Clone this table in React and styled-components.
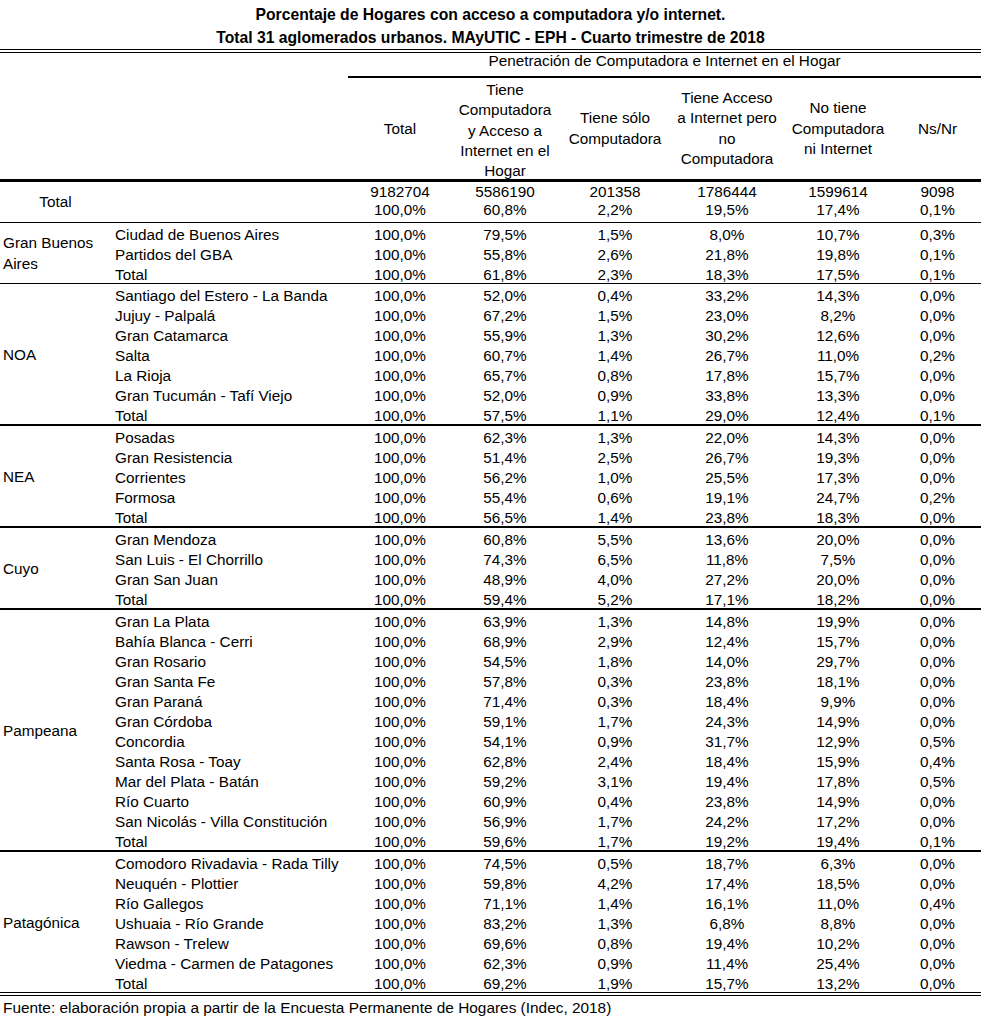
import React from 'react';
import styled, { createGlobalStyle } from 'styled-components';

const GlobalStyle = createGlobalStyle`
  body {
    margin: 0;
    background: #fff;
    color: #000;
    font-family: "Liberation Sans", Arial, sans-serif;
  }
`;

const widths = [111, 237, 104, 106, 114, 110, 112, 87];

const headers = [
  ['Total'],
  ['Tiene', 'Computadora', 'y Acceso a', 'Internet en el', 'Hogar'],
  ['Tiene sólo', 'Computadora'],
  ['Tiene Acceso', 'a Internet pero', 'no', 'Computadora'],
  ['No tiene', 'Computadora', 'ni Internet'],
  ['Ns/Nr'],
];

const totals = [
  ['9182704', '5586190', '201358', '1786444', '1599614', '9098'],
  ['100,0%', '60,8%', '2,2%', '19,5%', '17,4%', '0,1%'],
];

const groups = [
  {
    region: 'Gran Buenos Aires',
    border: '1px solid #000',
    rows: [
      ['Ciudad de Buenos Aires', '79,5%', '1,5%', '8,0%', '10,7%', '0,3%'],
      ['Partidos del GBA', '55,8%', '2,6%', '21,8%', '19,8%', '0,1%'],
      ['Total', '61,8%', '2,3%', '18,3%', '17,5%', '0,1%'],
    ],
  },
  {
    region: 'NOA',
    border: '2px solid #000',
    rows: [
      ['Santiago del Estero - La Banda', '52,0%', '0,4%', '33,2%', '14,3%', '0,0%'],
      ['Jujuy - Palpalá', '67,2%', '1,5%', '23,0%', '8,2%', '0,0%'],
      ['Gran Catamarca', '55,9%', '1,3%', '30,2%', '12,6%', '0,0%'],
      ['Salta', '60,7%', '1,4%', '26,7%', '11,0%', '0,2%'],
      ['La Rioja', '65,7%', '0,8%', '17,8%', '15,7%', '0,0%'],
      ['Gran Tucumán - Tafí Viejo', '52,0%', '0,9%', '33,8%', '13,3%', '0,0%'],
      ['Total', '57,5%', '1,1%', '29,0%', '12,4%', '0,1%'],
    ],
  },
  {
    region: 'NEA',
    border: '2px solid #000',
    rows: [
      ['Posadas', '62,3%', '1,3%', '22,0%', '14,3%', '0,0%'],
      ['Gran Resistencia', '51,4%', '2,5%', '26,7%', '19,3%', '0,0%'],
      ['Corrientes', '56,2%', '1,0%', '25,5%', '17,3%', '0,0%'],
      ['Formosa', '55,4%', '0,6%', '19,1%', '24,7%', '0,2%'],
      ['Total', '56,5%', '1,4%', '23,8%', '18,3%', '0,0%'],
    ],
  },
  {
    region: 'Cuyo',
    border: '2px solid #000',
    rows: [
      ['Gran Mendoza', '60,8%', '5,5%', '13,6%', '20,0%', '0,0%'],
      ['San Luis - El Chorrillo', '74,3%', '6,5%', '11,8%', '7,5%', '0,0%'],
      ['Gran San Juan', '48,9%', '4,0%', '27,2%', '20,0%', '0,0%'],
      ['Total', '59,4%', '5,2%', '17,1%', '18,2%', '0,0%'],
    ],
  },
  {
    region: 'Pampeana',
    border: '2px solid #000',
    rows: [
      ['Gran La Plata', '63,9%', '1,3%', '14,8%', '19,9%', '0,0%'],
      ['Bahía Blanca - Cerri', '68,9%', '2,9%', '12,4%', '15,7%', '0,0%'],
      ['Gran Rosario', '54,5%', '1,8%', '14,0%', '29,7%', '0,0%'],
      ['Gran Santa Fe', '57,8%', '0,3%', '23,8%', '18,1%', '0,0%'],
      ['Gran Paraná', '71,4%', '0,3%', '18,4%', '9,9%', '0,0%'],
      ['Gran Córdoba', '59,1%', '1,7%', '24,3%', '14,9%', '0,0%'],
      ['Concordia', '54,1%', '0,9%', '31,7%', '12,9%', '0,5%'],
      ['Santa Rosa - Toay', '62,8%', '2,4%', '18,4%', '15,9%', '0,4%'],
      ['Mar del Plata - Batán', '59,2%', '3,1%', '19,4%', '17,8%', '0,5%'],
      ['Río Cuarto', '60,9%', '0,4%', '23,8%', '14,9%', '0,0%'],
      ['San Nicolás - Villa Constitución', '56,9%', '1,7%', '24,2%', '17,2%', '0,0%'],
      ['Total', '59,6%', '1,7%', '19,2%', '19,4%', '0,1%'],
    ],
  },
  {
    region: 'Patagónica',
    border: '4px double #000',
    rows: [
      ['Comodoro Rivadavia - Rada Tilly', '74,5%', '0,5%', '18,7%', '6,3%', '0,0%'],
      ['Neuquén - Plottier', '59,8%', '4,2%', '17,4%', '18,5%', '0,0%'],
      ['Río Gallegos', '71,1%', '1,4%', '16,1%', '11,0%', '0,4%'],
      ['Ushuaia - Río Grande', '83,2%', '1,3%', '6,8%', '8,8%', '0,0%'],
      ['Rawson - Trelew', '69,6%', '0,8%', '19,4%', '10,2%', '0,0%'],
      ['Viedma - Carmen de Patagones', '62,3%', '0,9%', '11,4%', '25,4%', '0,0%'],
      ['Total', '69,2%', '1,9%', '15,7%', '13,2%', '0,0%'],
    ],
  },
];

const Sheet = styled.div`
  width: 981px;
`;

const Title = styled.div`
  padding-top: 3px;
  text-align: center;
  font-weight: bold;
  font-size: 15.7px;
  line-height: 23px;
  border-bottom: 4px double #000;
`;

const Grid = styled.table`
  width: 981px;
  border-collapse: collapse;
  table-layout: fixed;
  font-size: 15.3px;
`;

const Col = styled.col`
  width: ${p => p.$w}px;
`;

const Head = styled.thead`
  border-bottom: 3px solid #000;
`;

const Group = styled.tbody`
  border-bottom: ${p => p.$border};
`;

const Banner = styled.th`
  padding: 0;
  height: 23px;
  font-weight: normal;
  text-align: center;
  vertical-align: top;
  line-height: 15px;
  white-space: nowrap;
  border-bottom: 2px solid #000;
`;

const HeadCell = styled.th`
  padding: 0;
  height: 100px;
  font-weight: normal;
  text-align: center;
  vertical-align: middle;
  line-height: 20.3px;
  white-space: nowrap;
`;

const HeadLines = styled.div`
  margin-top: ${p => p.$shift}px;
  margin-bottom: -${p => p.$shift}px;
`;

const Cell = styled.td`
  padding: 0;
  height: 20px;
  line-height: 17px;
  text-align: center;
  vertical-align: bottom;
  white-space: nowrap;
`;

const Place = styled(Cell)`
  text-align: left;
  padding-left: 4px;
`;

const Region = styled.td`
  padding: 0 0 0 3px;
  line-height: 21px;
  text-align: left;
  vertical-align: middle;
`;

const TotalLabel = styled.td`
  padding: 0;
  text-align: center;
  vertical-align: middle;
`;

const TotalCell = styled.td`
  padding: 0 0 3px;
  height: 37px;
  line-height: 18px;
  text-align: center;
  vertical-align: bottom;
  white-space: nowrap;
`;

const Footer = styled.div`
  padding: 2px 0 0 3px;
  font-size: 15.4px;
  line-height: 20px;
`;

function Lines({ items }) {
  return items.map((t, i) => (
    <React.Fragment key={i}>
      {i > 0 && <br />}
      {t}
    </React.Fragment>
  ));
}

export default function App() {
  return (
    <Sheet>
      <GlobalStyle />
      <Title>
        Porcentaje de Hogares con acceso a computadora y/o internet.
        <br />
        Total 31 aglomerados urbanos. MAyUTIC - EPH - Cuarto trimestre de 2018
      </Title>
      <Grid>
        <colgroup>
          {widths.map((w, i) => <Col key={i} $w={w} />)}
        </colgroup>
        <Head>
          <tr>
            <HeadCell colSpan={2} rowSpan={2} />
            <Banner colSpan={6}>Penetración de Computadora e Internet en el Hogar</Banner>
          </tr>
          <tr>
            {headers.map((h, i) => (
              <HeadCell key={i}>
                <HeadLines $shift={h.length > 4 ? 2 : 0}>
                  <Lines items={h} />
                </HeadLines>
              </HeadCell>
            ))}
          </tr>
        </Head>
        <Group $border="1px solid #000">
          <tr>
            <TotalLabel>Total</TotalLabel>
            <TotalLabel />
            {totals[0].map((v, i) => (
              <TotalCell key={i}>
                {v}
                <br />
                {totals[1][i]}
              </TotalCell>
            ))}
          </tr>
        </Group>
        {groups.map(g => (
          <Group key={g.region} $border={g.border}>
            {g.rows.map(([place, ...vals], i) => (
              <tr key={place + i}>
                {i === 0 && <Region rowSpan={g.rows.length}>{g.region}</Region>}
                <Place>{place}</Place>
                <Cell>100,0%</Cell>
                {vals.map((v, j) => <Cell key={j}>{v}</Cell>)}
              </tr>
            ))}
          </Group>
        ))}
      </Grid>
      <Footer>Fuente: elaboración propia a partir de la Encuesta Permanente de Hogares (Indec, 2018)</Footer>
    </Sheet>
  );
}
